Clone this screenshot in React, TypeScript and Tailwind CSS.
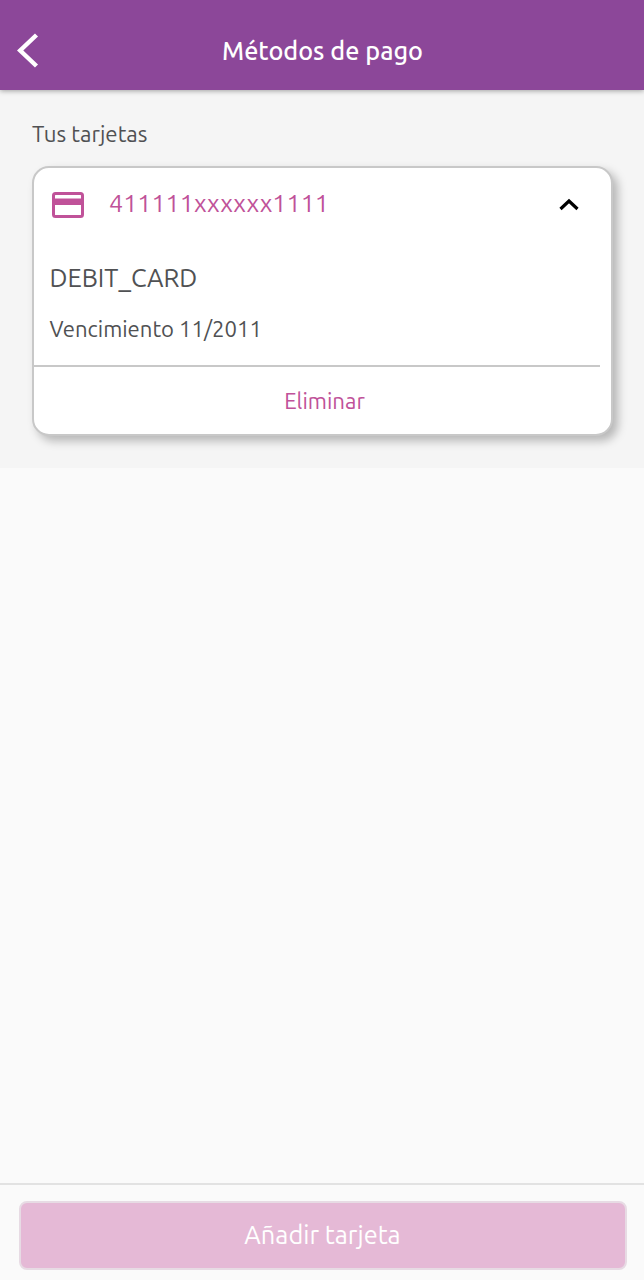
export default function App() {
  return (
    <div className="flex h-[1280px] w-[644px] flex-col overflow-hidden bg-[#fafafa] font-['Ubuntu','Noto_Sans',sans-serif] text-[#505153]">
      <header className="relative z-10 grid h-[90px] shrink-0 grid-cols-[60px_1fr_60px] items-center bg-[#8c4799] pt-3 shadow-[0_1px_5px_rgba(0,0,0,0.35)]">
        <button aria-label="Volver" className="pl-4">
          <svg width="24" height="36" viewBox="0 0 24 36" fill="none" stroke="#fff" strokeWidth="4.4">
            <path d="M20.5 2 4.2 17.5 20.5 33" />
          </svg>
        </button>
        <h1 className="pl-px text-center text-[25.2px] leading-8 font-medium whitespace-nowrap text-white">Métodos de pago</h1>
      </header>

      <main className="flex min-h-0 flex-1 flex-col">
        <section className="h-[378px] bg-[#f5f5f5] pt-[28px] pr-[31px] pl-8">
          <h2 className="h-12 text-[22.3px] leading-8 whitespace-nowrap">Tus tarjetas</h2>
          <article className="flex h-[270px] flex-col rounded-[17px] border-2 border-[#c8c8c8] bg-white shadow-[5px_5px_10px_rgba(0,0,0,0.26)]">
            <div className="flex h-[74px] items-center pr-8 pl-[18px] text-[#c05299]">
              <svg width="32" height="26" viewBox="0 0 32 26" fill="none" stroke="currentColor" strokeWidth="3">
                <rect x="1.5" y="1.5" width="29" height="23" rx="2" />
                <path d="M1.5 9.75h29" strokeWidth="6.5" />
              </svg>
              <span className="-mt-1 ml-[25px] text-[25.1px] leading-8 whitespace-nowrap">411111xxxxxx1111</span>
              <svg className="ml-auto" width="20" height="14" viewBox="0 0 20 14" fill="none" stroke="#000" strokeWidth="3.2">
                <path d="M1.5 11 10 3l8.5 8" />
              </svg>
            </div>
            <div className="h-[123px] pt-5 pl-[15.5px]">
              <p className="text-[25.4px] leading-8 whitespace-nowrap">DEBIT_CARD</p>
              <p className="mt-[19px] text-[22.1px] leading-8 whitespace-nowrap">Vencimiento 11/2011</p>
            </div>
            <hr className="mr-[11px] border-t-2 border-[#c8c8c8]" />
            <button className="flex-1 pt-px pl-1 text-[22.2px] leading-8 text-[#c05299]">Eliminar</button>
          </article>
        </section>
      </main>

      <footer className="h-[97px] shrink-0 border-t-2 border-[#e2e2e2] bg-[#fafafa] pt-4 pr-[17px] pl-[19px]">
        <button className="h-[69px] w-full rounded-lg border-2 border-[#e7dbe4] bg-[#e5b9d6] pr-px pb-0.5 text-[25.4px] leading-8 text-white">Añadir tarjeta</button>
      </footer>
    </div>
  );
}
